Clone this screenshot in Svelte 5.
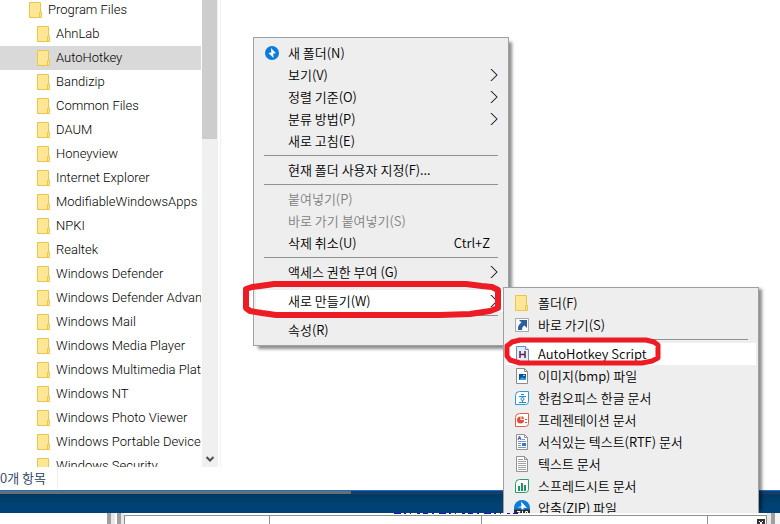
<script lang="ts">
	type Item = {
		label?: string;
		icon?: string;
		hint?: string;
		arrow?: boolean;
		disabled?: boolean;
		active?: boolean;
		separator?: boolean;
	};

	const folders = [
		'AhnLab', 'AutoHotkey', 'Bandizip', 'Common Files', 'DAUM', 'Honeyview',
		'Internet Explorer', 'ModifiableWindowsApps', 'NPKI', 'Realtek',
		'Windows Defender', 'Windows Defender Advanced',
		'Windows Mail', 'Windows Media Player', 'Windows Multimedia Platform',
		'Windows NT', 'Windows Photo Viewer', 'Windows Portable Devices', 'Windows Security'
	];

	let selected = $state('AutoHotkey');

	const mainMenu: Item[] = [
		{ label: '새 폴더(N)', icon: 'bandizip' },
		{ label: '보기(V)', arrow: true },
		{ label: '정렬 기준(O)', arrow: true },
		{ label: '분류 방법(P)', arrow: true },
		{ label: '새로 고침(E)' },
		{ separator: true },
		{ label: '현재 폴더 사용자 지정(F)...' },
		{ separator: true },
		{ label: '붙여넣기(P)', disabled: true },
		{ label: '바로 가기 붙여넣기(S)', disabled: true },
		{ label: '삭제 취소(U)', hint: 'Ctrl+Z' },
		{ separator: true },
		{ label: '액세스 권한 부여 (G)', arrow: true },
		{ separator: true },
		{ label: '새로 만들기(W)', arrow: true, active: true },
		{ separator: true },
		{ label: '속성(R)' }
	];

	const newMenu: Item[] = [
		{ label: '폴더(F)', icon: 'folder' },
		{ label: '바로 가기(S)', icon: 'shortcut' },
		{ separator: true },
		{ label: 'AutoHotkey Script', icon: 'ahk', active: true },
		{ label: '이미지(bmp) 파일', icon: 'bmp' },
		{ label: '한컴오피스 한글 문서', icon: 'hwp' },
		{ label: '프레젠테이션 문서', icon: 'show' },
		{ label: '서식있는 텍스트(RTF) 문서', icon: 'rtf' },
		{ label: '텍스트 문서', icon: 'txt' },
		{ label: '스프레드시트 문서', icon: 'cell' },
		{ label: '압축(ZIP) 파일', icon: 'zip' }
	];
</script>

{#snippet icon(name: string)}
	<svg class="icon" width="16" height="16" viewBox="0 0 16 16" aria-hidden="true">
		{#if name === 'folder'}
			<path d="M1.500.5h11v11h1v4h-12z" fill="#ffe694" stroke="#ebc64b" />
			<path d="M11.500 15.500v-5h2v5z" fill="#ffe694" stroke="#ebc64b" />
		{:else if name === 'bandizip'}
			<circle cx="8" cy="8" r="7" fill="#0a7cdb" />
			<path d="M7 3l5 5.200-2.800.3L9.500 13l-5-5 2.800-.4z" fill="#fff" />
		{:else if name === 'shortcut'}
			<path d="M1.500 1.500h13v13h-13z" fill="#fafafa" stroke="#a9a9a9" />
			<path d="M5 3h8v8l-2.500-2.500C8.500 9.500 8 11 8 13H4c-.5-3.500.8-5.500 3.500-7.500z" fill="#2d5f9e" />
		{:else if name === 'ahk'}
			<path d="M2.500.5h9l3 3v12h-12z" fill="#e1ebfa" stroke="#6c8cc4" />
			<path d="M11.500.5v3h3" fill="#fff" stroke="#6c8cc4" />
			<path d="M6 5v7M11 5v7M6 8.500h5" fill="none" stroke="#63204a" stroke-width="1.500" />
		{:else if name === 'bmp'}
			<path d="M2.500.5h8l3 3v12h-11z" fill="#fff" stroke="#8b8b8b" />
			<path d="M10.500.5v3h3" fill="none" stroke="#8b8b8b" />
			<path d="M5 6h7v6H5z" fill="#0c4f9e" />
			<path d="m5 12 3-3 2 1.500 2-1V12z" fill="#30a4e8" />
			<circle cx="10" cy="7.500" r=".8" fill="#fff" />
		{:else if name === 'hwp'}
			<path d="M5.500 1.500h9v10q0 3-3 3h-10v-9q0-4 4-4z" fill="#fff" stroke="#2b9bd6" />
			<path d="M7 4.500h3M5 6.500h7M8.500 10.500v2M5 12.500h7" fill="none" stroke="#1d8ccc" />
			<circle cx="8.500" cy="9" r="1.500" fill="none" stroke="#1d8ccc" />
		{:else if name === 'show'}
			<path d="M5.500 1.500h9v10q0 3-3 3h-10v-9q0-4 4-4z" fill="#fff" stroke="#e2604b" />
			<path d="M6.500 4.500a3.500 3.500 0 1 0 3.500 3.500H6.500z" fill="#df4f38" />
			<path d="M7.500 4A3 3 0 0 1 10 7H7.500z" fill="#df4f38" />
			<path d="M11 7.500h2M11 10.500h2" stroke="#df4f38" />
		{:else if name === 'rtf'}
			<path d="M2.500.5h8l3 3v12h-11z" fill="#fff" stroke="#929292" />
			<path d="M10.500.5v3h3" fill="none" stroke="#929292" />
			<path d="m4 6 1.500-4L7 6M4.500 4.500h2" fill="none" stroke="#3b4fc4" />
			<path d="M8 5.500h3M4 7.500h8M4 9.500h3M4 11.500h3M4 13.500h8" stroke="#7f96b8" />
			<path d="M8 9h4v3H8z" fill="#2a7fce" />
		{:else if name === 'txt'}
			<path d="M2.500.5h8l3 3v12h-11z" fill="#fff" stroke="#929292" />
			<path d="M10.500.5v3h3" fill="none" stroke="#929292" />
			<path d="M4 3.500h5M4 5.500h8M4 7.500h8M4 9.500h8M4 11.500h8M4 13.500h8" stroke="#a2a2a2" />
		{:else if name === 'cell'}
			<path d="M5.500 1.500h9v10q0 3-3 3h-10v-9q0-4 4-4z" fill="#fff" stroke="#2b9a68" />
			<path d="M4 8h2v5H4zM7 5h2v8H7zM10 7h2v6h-2z" fill="#1f9560" />
		{:else if name === 'zip'}
			<circle cx="8" cy="8" r="8" fill="#0a7cdb" />
			<path d="M7 1.500 13 8l-3.500-.2V10h-2V7.500L3 7.200l4.500-1z" fill="#fff" />
			<path d="M0 9.500h16V16H0z" fill="#2d2d2d" />
			<path d="M3 11.500h3L3 15h3M8.500 11v4.500M11.500 15.500v-4h2v2h-2" fill="none" stroke="#fff" />
		{/if}
	</svg>
{/snippet}

{#snippet menu(items: Item[])}
	{#each items as item}
		{#if item.separator}
			<hr />
		{:else}
			<button class="item" class:active={item.active} disabled={item.disabled} role="menuitem">
				<span class="slot">
					{#if item.icon}{@render icon(item.icon)}{/if}
				</span>
				<span class="label">{item.label}</span>
				{#if item.hint}<span class="hint">{item.hint}</span>{/if}
				{#if item.arrow}
					<svg class="arrow" width="8" height="14" viewBox="0 0 8 14" aria-hidden="true">
						<path d="m.5 1 6 6-6 6" fill="none" stroke="#d08a50" />
						<path d="m1.500 1 6 6-6 6" fill="none" stroke="#4a9be0" />
						<path d="m1 1 6 6-6 6" fill="none" stroke="#3a3040" />
					</svg>
				{/if}
			</button>
		{/if}
	{/each}
{/snippet}

<div class="screen">
	<main class="explorer">
		<nav class="sidebar">
			<div class="tree">
				<button class="node root">
					{@render icon('folder')}<span>Program Files</span>
				</button>
				{#each folders as folder}
					<button class="node" class:selected={folder === selected} onclick={() => (selected = folder)}>
						{@render icon('folder')}<span>{folder}</span>
					</button>
				{/each}
			</div>
			<div class="scrollbar">
				<div class="thumb"></div>
				<svg width="8" height="6" viewBox="0 0 8 6" aria-hidden="true">
					<path d="m.5 1 3.500 3.500L7.500 1" fill="none" stroke="#505050" stroke-width="2" />
				</svg>
			</div>
		</nav>
		<section class="files"></section>
	</main>
	<footer class="status"><span>0개 항목</span></footer>
	<div class="edge"><div class="edge-lit"></div></div>
	<div class="taskbar"></div>
	<div class="sheet">
		<div class="gutter"></div>
		<div class="page">
			<svg class="link-line" width="124" height="2" viewBox="0 0 124 2" aria-hidden="true">
				<path d="M0 .5h124" stroke="#1414d2" stroke-dasharray="7 3 2 4 1 6 3 3 5 4 2 5" />
			</svg>
			<div class="grid">
				<div class="cell first"></div>
				<div class="cell second"></div>
				<div class="cell third"></div>
				<div class="cell last">
					<svg class="close" width="8" height="8" viewBox="0 0 8 8" aria-hidden="true">
						<path d="M0 0h8v8H0z" fill="#333" />
						<path d="m2 2 4 4M6 2 2 6" stroke="#fff" />
					</svg>
				</div>
			</div>
		</div>
		<div class="gutter end"></div>
	</div>

	<div class="menu main" role="menu">{@render menu(mainMenu)}</div>
	<div class="menu sub" role="menu">{@render menu(newMenu)}</div>

	<svg class="marks" aria-hidden="true">
		<path class="thick" d="M260 286 274 284 466 284 482 286 492 287 498 290 498 308 490 311 470 314 440 315 276 315 262 313 250 311 246 308 246 289 252 287Z" />
		<path d="M512 342 520 340 646 340 654 342 658 345 658 358 652 361 642 363 520 363 510 360 507 356 507 346Z" />
	</svg>
</div>

<style>
	:global(body) {
		margin: 0;
		background: #fff;
	}

	.screen {
		position: relative;
		display: flex;
		flex-direction: column;
		height: 100vh;
		overflow: hidden;
		font-family: 'Noto Sans CJK KR', sans-serif;
		font-size: 13px;
		font-weight: 350;
		color: #000;
	}

	button {
		border: none;
		background: none;
		padding: 0;
		font: inherit;
		color: inherit;
		text-align: left;
	}

	.icon {
		flex: none;
		display: block;
	}

	.explorer {
		flex: 1;
		min-height: 0;
		display: flex;
	}

	.sidebar {
		flex: none;
		display: flex;
		gap: 1px;
		width: 218px;
		min-height: 0;
		padding-right: 2px;
		border-right: 1px solid #f0f0f0;
	}

	.tree {
		flex: 1;
		min-width: 0;
		overflow: hidden;
		margin-top: -2px;
		font-family: Roboto, 'Liberation Sans', sans-serif;
		font-weight: 300;
	}

	.node {
		display: flex;
		align-items: center;
		gap: 4px;
		width: 100%;
		height: 24px;
		padding: 0 0 1px 36px;
		white-space: nowrap;
	}

	.node.root {
		padding-left: 28px;
	}

	.node.selected {
		background: #d9d9d9;
	}

	.scrollbar {
		display: flex;
		flex-direction: column;
		align-items: center;
		justify-content: space-between;
		width: 16px;
		padding-bottom: 5px;
		background: #f0f0f0;
	}

	.thumb {
		width: 15px;
		height: 139px;
		align-self: flex-start;
		background: #cdcdcd;
	}

	.files {
		flex: 1;
	}

	.status {
		height: 23px;
		line-height: 22px;
		color: #1e395b;
	}

	.status span {
		display: inline-block;
		width: 57px;
		border-right: 1px solid #f0f0f0;
	}

	.edge {
		height: 3px;
		border-top: 1px solid #0078d7;
		background: #1f3a68;
	}

	.edge-lit {
		width: 45%;
		height: 100%;
		background: #6d6d6d;
	}

	.taskbar {
		height: 19px;
		background: linear-gradient(#003a63, #004275 60%);
	}

	.sheet {
		display: flex;
		height: 11px;
		padding-left: 107px;
	}

	.gutter {
		flex: none;
		width: 17px;
		background: linear-gradient(90deg, #a0a0a0 4px, #e8e8e8 4px 8px, #fff 8px 10px, #a0a0a0 10px 14px, #e8e8e8 14px);
	}

	.gutter.end {
		width: 13px;
		background: linear-gradient(90deg, #e8e8e8 4px, #a0a0a0 4px 8px, #f4f4f4 8px);
	}

	.page {
		flex: 1;
		display: flex;
		flex-direction: column;
	}

	.link-line {
		flex: none;
		display: block;
		margin-left: 42%;
	}

	.grid {
		flex: 1;
		min-height: 0;
		display: flex;
		overflow: hidden;
		border: 1px solid #8f8f8f;
		border-bottom: none;
	}

	.cell {
		flex: 145 1 0;
		border-right: 1px solid #8f8f8f;
	}

	.cell.second {
		flex-grow: 213;
	}

	.cell.third {
		flex-grow: 227;
	}

	.cell.last {
		flex-grow: 58;
		display: flex;
		justify-content: flex-end;
		padding: 3px 1px 0 0;
		border: none;
	}

	.close {
		display: block;
	}

	.menu {
		position: absolute;
		box-sizing: border-box;
		width: 256px;
		padding: 4px 2px;
		background: #eee;
		border: 1px solid #a0a0a0;
		box-shadow: 4px 4px 3px -1px rgba(0, 0, 0, 0.45);
	}

	.menu.main {
		left: 253px;
		top: 37px;
	}

	.menu.sub {
		left: 503px;
		top: 287px;
		height: 226px;
		padding-bottom: 0;
		border-bottom: none;
		overflow: hidden;
		box-shadow: 5px 0 3px -2px rgba(0, 0, 0, 0.45);
	}

	.menu hr {
		height: 1px;
		margin: 3px 8px;
		border: none;
		background: #919191;
	}

	.item {
		display: flex;
		align-items: center;
		width: 100%;
		height: 22px;
		line-height: 20px;
		padding: 0 8px 1px 0;
		white-space: nowrap;
	}

	.item.active {
		background: #fff;
	}

	.item:disabled {
		color: #808080;
	}

	.slot {
		flex: none;
		width: 24px;
		padding-left: 8px;
	}

	.label {
		flex: 1;
	}

	.hint {
		padding-right: 8px;
	}

	.arrow {
		flex: none;
	}

	.marks {
		position: absolute;
		left: 0;
		top: 0;
		width: 100%;
		height: 100%;
		pointer-events: none;
	}

	.marks path {
		fill: none;
		stroke: #ed1c24;
		stroke-width: 5px;
		stroke-linejoin: round;
	}

	.marks .thick {
		stroke-width: 6px;
	}
</style>
